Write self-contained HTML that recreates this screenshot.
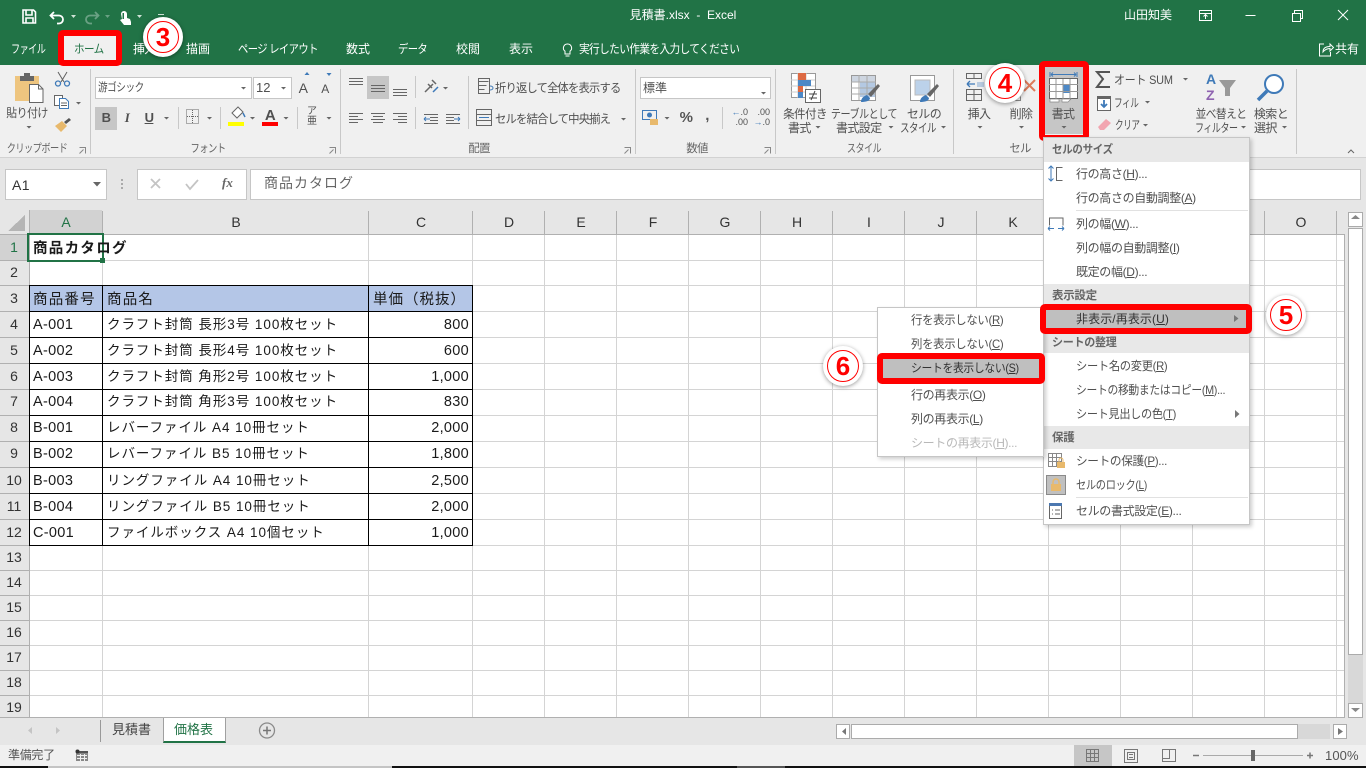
<!DOCTYPE html>
<html lang="ja"><head><meta charset="utf-8"><title>見積書.xlsx - Excel</title>
<style>
html,body{margin:0;padding:0;background:#fff}
#p{position:relative;width:1366px;height:768px;overflow:hidden;background:#fff;font-family:"Liberation Sans","Noto Sans CJK JP",sans-serif;color:#505050}
.b,.t,svg{position:absolute}
svg{left:0;top:0}
.t{white-space:nowrap;font-size:11.5px;line-height:20px;letter-spacing:-.6px;transform-origin:0 50%}
.c{transform:translateX(-50%);transform-origin:50% 50%}
.r{transform:translateX(-100%)}
.w{color:#fff;font-size:12px;letter-spacing:-.7px}
.s{color:#1a1a1a;font-size:14.5px;letter-spacing:.3px;font-family:"Liberation Sans","Noto Sans CJK JP",sans-serif}
.k{font-size:13.5px;letter-spacing:.95px}
.h{color:#333;font-size:14px;letter-spacing:0}
.m{font-size:12px;letter-spacing:-.35px;color:#505050}
.mh{font-size:11.5px;font-weight:bold;color:#666;letter-spacing:-.3px}
.l{color:#666;font-size:11.5px;letter-spacing:-.7px}
u{text-underline-offset:1px}
.red{border:6px solid #f00;border-radius:5px;box-sizing:border-box}
.n{position:absolute;width:40px;height:40px;border-radius:50%;background:#fff;box-shadow:0 1px 4px rgba(0,0,0,.4)}
.n i{position:absolute;left:4px;top:4px;width:30px;height:30px;border:1px solid #f00;border-radius:50%;color:#f00;font:bold 26px/30px "Liberation Sans",sans-serif;text-align:center;font-style:normal}
</style></head><body><div id="p">

<div class="b" style="left:0;top:0;width:1366px;height:65px;background:#217346"></div>
<div class="b" style="left:0;top:65px;width:1366px;height:93px;background:#f0f0f0;border-bottom:1px solid #d2d2d2;box-sizing:border-box"></div>
<div class="b" style="left:0;top:158px;width:1366px;height:52px;background:#e6e6e6"></div>
<div class="b" style="left:0;top:210px;width:1345px;height:24px;background:#e6e6e6"></div>
<div class="b" style="left:0;top:234px;width:29px;height:483px;background:#e6e6e6"></div>
<div class="b" style="left:29px;top:210px;width:73px;height:24px;background:#d2d2d2"></div>
<div class="b" style="left:0;top:234px;width:29px;height:26px;background:#d2d2d2"></div>
<div class="b" style="left:1345px;top:210px;width:21px;height:507px;background:#e6e6e6"></div>
<div class="b" style="left:29px;top:285px;width:443px;height:26px;background:#b4c6e7"></div>
<div class="b" style="left:0;top:717px;width:1366px;height:28px;background:#e6e6e6"></div>
<div class="b" style="left:0;top:745px;width:1366px;height:21px;background:#f0f0f0"></div>
<div class="b" style="left:0;top:766px;width:48px;height:2px;background:#111"></div>
<div class="b" style="left:48px;top:766px;width:344px;height:2px;background:#c4c4c4"></div>
<div class="b" style="left:392px;top:766px;width:974px;height:2px;background:#111"></div>
<div class="b" style="left:737px;top:766px;width:48px;height:2px;background:#555"></div>

<!-- boxes -->
<div class="b" style="left:95px;top:77px;width:157px;height:22px;background:#fff;border:1px solid #c6c6c6;box-sizing:border-box"></div>
<div class="b" style="left:253px;top:77px;width:39px;height:22px;background:#fff;border:1px solid #c6c6c6;box-sizing:border-box"></div>
<div class="b" style="left:640px;top:77px;width:131px;height:22px;background:#fff;border:1px solid #c6c6c6;box-sizing:border-box"></div>
<div class="b" style="left:95px;top:107px;width:22px;height:23px;background:#c6c6c6"></div>
<div class="b" style="left:367px;top:76px;width:22px;height:23px;background:#c6c6c6"></div>
<div class="b" style="left:1045px;top:66px;width:38px;height:68px;background:#c6c6c6"></div>
<div class="b" style="left:5px;top:169px;width:102px;height:31px;background:#fff;border:1px solid #c6c6c6;box-sizing:border-box"></div>
<div class="b" style="left:137px;top:169px;width:110px;height:31px;background:#fff;border:1px solid #c6c6c6;box-sizing:border-box"></div>
<div class="b" style="left:250px;top:169px;width:1111px;height:31px;background:#fff;border:1px solid #c6c6c6;box-sizing:border-box"></div>
<div class="b" style="left:1348px;top:212px;width:15px;height:15px;background:#fff;border:1px solid #ababab;box-sizing:border-box"></div>
<div class="b" style="left:1348px;top:228px;width:15px;height:427px;background:#fff;border:1px solid #ababab;box-sizing:border-box"></div>
<div class="b" style="left:1348px;top:655px;width:15px;height:48px;background:#d8d8d8"></div>
<div class="b" style="left:1348px;top:703px;width:15px;height:15px;background:#fff;border:1px solid #ababab;box-sizing:border-box"></div>
<div class="b" style="left:836px;top:724px;width:14px;height:15px;background:#fff;border:1px solid #ababab;box-sizing:border-box"></div>
<div class="b" style="left:851px;top:724px;width:447px;height:15px;background:#fff;border:1px solid #ababab;box-sizing:border-box"></div>
<div class="b" style="left:1298px;top:724px;width:32px;height:15px;background:#d8d8d8"></div>
<div class="b" style="left:1333px;top:724px;width:14px;height:15px;background:#fff;border:1px solid #ababab;box-sizing:border-box"></div>
<div class="b" style="left:1074px;top:745px;width:38px;height:21px;background:#c6c6c6"></div>
<div class="b" style="left:163px;top:717px;width:63px;height:26px;background:#fff;border:1px solid #a0a0a0;border-top:0;border-bottom:2px solid #217346;box-sizing:border-box"></div>

<!-- grid -->
<svg width="1366" height="768" fill="none" shape-rendering="crispEdges">
<g stroke="#d4d4d4">
<path d="M29 260.5H1345M29 285.5H1345M29 311.5H1345M29 337.5H1345M29 363.5H1345M29 389.5H1345M29 415.5H1345M29 441.5H1345M29 467.5H1345M29 493.5H1345M29 519.5H1345M29 545.5H1345M29 570.5H1345M29 595.5H1345M29 620.5H1345M29 645.5H1345M29 670.5H1345M29 695.5H1345"/>
<path d="M102.5 234V717M368.5 234V717M472.5 234V717M544.5 234V717M616.5 234V717M688.5 234V717M760.5 234V717M832.5 234V717M904.5 234V717M976.5 234V717M1048.5 234V717M1120.5 234V717M1192.5 234V717M1264.5 234V717M1336.5 234V717"/>
</g>
<g stroke="#b0b0b0">
<path d="M29.5 210V717M0 234.5H1345M0 717.5H1345M1344.5 234V717"/>
<path d="M102.5 211V234M368.5 211V234M472.5 211V234M544.5 211V234M616.5 211V234M688.5 211V234M760.5 211V234M832.5 211V234M904.5 211V234M976.5 211V234M1048.5 211V234M1120.5 211V234M1192.5 211V234M1264.5 211V234M1336.5 211V234"/>
<path d="M0 260.5H29M0 285.5H29M0 311.5H29M0 337.5H29M0 363.5H29M0 389.5H29M0 415.5H29M0 441.5H29M0 467.5H29M0 493.5H29M0 519.5H29M0 545.5H29M0 570.5H29M0 595.5H29M0 620.5H29M0 645.5H29M0 670.5H29M0 695.5H29"/>
</g>
<g stroke="#000">
<path d="M29 285.5H473M29 311.5H473M29 337.5H473M29 363.5H473M29 389.5H473M29 415.5H473M29 441.5H473M29 467.5H473M29 493.5H473M29 519.5H473M29 545.5H473M29.5 285V546M102.5 285V546M368.5 285V546M472.5 285V546"/>
</g>
<path d="M8 231L25 215V231Z" fill="#b5b5b5"/>
<rect x="28" y="234" width="75" height="27" stroke="#217346" stroke-width="2" />
<rect x="100" y="258" width="5" height="5" fill="#217346"/>
<!-- ribbon dividers -->
<path stroke="#c8c8c8" d="M90.5 69V154M340.5 69V154M635.5 69V154M775.5 69V154M953.5 69V154M1296.5 69V154M178.5 107V129M220.5 107V129M297.5 107V129M415.5 76V98M415.5 107V129M468.5 76V129M722.5 107V129"/>
<path stroke="#999" d="M100.5 720V742"/>
</svg>

<!-- icons -->
<svg width="1366" height="768" fill="none">
<!-- QAT -->
<g stroke="#fff" stroke-width="1.6"><path d="M23 10h10.5l2 2v11H23z"/><path d="M26 10v5h6v-5M26 23v-5h7v5" /></g>
<path d="M54 12l-3.500 3.500 3.500 3.500M51 15.500h8a4 4 0 0 1 0 8h-2" stroke="#fff" stroke-width="1.800"/>
<path d="M71 15h5l-2.500 3z" fill="#cfe3d7"/>
<path d="M95 12l3.500 3.500-3.500 3.500M98 15.500h-8a4 4 0 0 0 0 8h2" stroke="#6aa184" stroke-width="1.800"/>
<path d="M105 15h5l-2.500 3z" fill="#6aa184"/>
<path d="M121 14a3 3 0 0 1 6 0v4l3 1 1 3v3h-7l-4-5 2-1z" fill="#fff"/><path d="M122.500 13v6h1.500v-6z" fill="#217346"/>
<path d="M137 15h5l-2.500 3z" fill="#cfe3d7"/>
<path d="M158 14.500h6" stroke="#cfe3d7"/>
<!-- bulb -->
<path d="M567.500 44a4 4 0 0 0-2.500 7.200V54h5v-2.800A4 4 0 0 0 567.500 44zM565.500 56h4" stroke="#fff" stroke-width="1"/>
<!-- share -->
<path d="M1324 44h-4.500v12h11v-4M1323 52c0-4 3-5.500 7-5.500V44l3.500 3.500-3.500 3.500v-2.500c-3 0-5 1-7 3.500z" stroke="#fff"/>
<!-- window -->
<g stroke="#fff"><path d="M1199.500 10.500h12v10h-12zM1199.500 13.500h12M1205.500 19v-4M1203.500 16.500l2-2 2 2"/><path d="M1245.500 15.500h10"/><path d="M1292.500 13.500h8v8h-8zM1294.500 13v-2.500h8v8h-2"/><path d="M1338 10l10 10M1348 10l-10 10"/></g>
<!-- clipboard -->
<path d="M15 76h24v25H15z" fill="#eec57f"/><path d="M20 76h14v5H20z" fill="#666"/><path d="M24 73h6v4h-6z" fill="#666"/>
<path d="M29.500 84.500h9l4.500 4.500v13.500H29.500z" fill="#fff" stroke="#666"/><path d="M38.500 84.500v4.500h4.500" stroke="#666"/>
<g stroke="#606060"><path d="M58 72l6 10M67 72l-6 10"/></g><circle cx="58" cy="83.500" r="2.500" stroke="#3f7ab8" stroke-width="1.300"/><circle cx="67" cy="83.500" r="2.500" stroke="#3f7ab8" stroke-width="1.300"/>
<path d="M54.500 95.500h8v10h-8z" fill="#fff" stroke="#666"/><path d="M59.500 98.500h6l3 3v7h-9z" fill="#fff" stroke="#3f7ab8"/><path d="M61 103h6M61 105.500h6" stroke="#666"/>
<path d="M55 126l7-5 5 5-6 6z" fill="#e8b96c"/><path d="M64 122l5-4 2 2-5 4z" fill="#555"/>
<!-- carets -->
<g fill="#666"><path d="M26.500 126h5l-2.500 2.500zM76 102h5l-2.500 2.500zM241 87h5l-2.500 2.500zM281 87h5l-2.500 2.500zM164 117h5l-2.500 2.500zM207 117h5l-2.500 2.500zM250 117h5l-2.500 2.500zM283.500 117h5l-2.500 2.500zM326.500 117h5l-2.500 2.500zM443 87h5l-2.500 2.500zM621 118h5l-2.500 2.500zM761 92h5l-2.500 2.500zM664.500 117h5l-2.500 2.500zM977.500 126h5l-2.500 2.500zM1019 126h5l-2.500 2.500zM1061.500 126h5l-2.500 2.500zM1183 78h5l-2.500 2.500zM1145 101h5l-2.500 2.500zM1143 124h5l-2.500 2.500zM815.500 126h5l-2.500 2.500zM888.500 126h5l-2.500 2.500zM941 126h5l-2.500 2.500zM1241 126h5l-2.500 2.500zM1282 126h5l-2.500 2.500zM93 182h8l-4 4.500z"/></g>
<path d="M307 72l2.500 3h-5zM329 76l2.500-3h-5z" fill="#3f7ab8"/><path d="M1348 153l3-3 3 3" stroke="#666"/>
<!-- align -->
<g stroke="#666"><path d="M349 78.500h14M349 81.500h14M349 84.500h14M371 85.500h14M371 88.500h14M371 91.500h14M393 89.500h14M393 92.500h14M393 95.500h14"/>
<path d="M349 113.500h14M349 116.500h9M349 119.500h14M349 122.500h9M371 113.500h14M373 116.500h10M371 119.500h14M373 122.500h10M393 113.500h14M398 116.500h9M393 119.500h14M398 122.500h9"/>
<path d="M424 114.500h14M430 117.500h8M430 120.500h8M424 123.500h14M446 114.500h14M446 117.500h8M446 120.500h8M446 123.500h14"/>
<path d="M478.500 81.500h10M478.500 85.500h8M478.500 89.500h6M478.500 78.500h11v15h-11z"/>
<path d="M476.500 109.500h15v16h-15zM476.500 114.500h15M476.500 120.500h15"/></g>
<path d="M424 119h6M424 119l2-2M424 119l2 2M460 119h-6M460 119l-2-2M460 119l-2 2M479 117.500h10" stroke="#3f7ab8"/>
<path d="M490 86c2 0 3 1 3 2s-1 2-3 2" stroke="#3f7ab8"/>
<!-- orientation -->
<path d="M425 92l8-8M428 84l4 4M432 80l4 4" stroke="#666" stroke-width="1.500"/><path d="M433 92l5-5" stroke="#3f7ab8" stroke-width="1.500"/>
<!-- font row -->
<g stroke="#666"><path d="M186.500 109.500h12v14h-12z" stroke-dasharray="1 1"/><path d="M192.500 110v13M187 116.500h11" stroke-dasharray="1 1"/></g>
<path d="M232 113l6-6 5 5-6 6z" fill="#fff" stroke="#666"/><path d="M243 113l2 4" stroke="#3f7ab8" stroke-width="1.500"/>
<rect x="228" y="122" width="16" height="4" fill="#ff0"/><rect x="262" y="122" width="16" height="4" fill="#f00"/>
<!-- currency -->
<path d="M642.500 110.500h14v9h-14z" stroke="#3f7ab8"/><circle cx="649.500" cy="115" r="2.500" fill="#3f7ab8"/><path d="M650 119h8v6h-8z" fill="#e8b96c"/>
<!-- Cond format -->
<path d="M791.500 73.500h24v24h-24z" fill="#fff" stroke="#999"/>
<path d="M791 80h24M791 86h24M791 92h24M798 73v25M806 73v25" stroke="#ccc"/>
<path d="M798 73h8v7h-8zM798 86h5v6h-5z" fill="#dd6a43"/><path d="M798 80h13v6h-13zM798 92h5v6h-5z" fill="#4c88c6"/>
<path d="M805.500 89.500h15v13h-15z" fill="#fff" stroke="#666"/><path d="M809 94h8M809 98h8M815 91l-4 9" stroke="#444"/>
<!-- table -->
<path d="M851.500 75.500h24v25h-24z" fill="#fff" stroke="#999"/><path d="M852 76h23v6h-23z" fill="#cdd5e0"/><path d="M860 82h15v15h-15z" fill="#b4c9e3"/><path d="M851 82h25M851 88h25M851 94h25M859 75v25M867 75v25" stroke="#aaa"/><path d="M868 94l10-10 2 2-9 11z" fill="#666"/><path d="M861 102c0-4 3-6 6-7l3 3c0 3-4 4-9 4z" fill="#3f7ab8"/>
<!-- cell style -->
<path d="M910.500 75.500h24v25h-24z" fill="#fff" stroke="#999"/><path d="M915 80h15v15h-15z" fill="#bcd2ea" stroke="#bbb"/><path d="M927 94l10-10 2 2-9 11z" fill="#666"/><path d="M920 102c0-4 3-6 6-7l3 3c0 3-4 4-9 4z" fill="#3f7ab8"/>
<!-- insert -->
<g stroke="#666"><path d="M966.500 73.500h15v5h-15zM974 73.500v5M966.500 89.500h15v11h-15zM966.500 94.500h15M974 89.500v11"/></g><path d="M967 84h8M967 84l3-3M967 84l3 3" stroke="#3f7ab8" stroke-width="1.300"/><rect x="977" y="82" width="7" height="5" fill="#b8cbe0"/>
<!-- delete -->
<path d="M1024 80l11 11M1035 80l-11 11" stroke="#dd7a5a" stroke-width="2"/><path d="M1020.500 96.500v4h-5" stroke="#888"/>
<!-- 書式 icon -->
<path d="M1049.500 78.500h28v20h-28z" fill="#fff" stroke="#666"/><path d="M1063 84h7v9h-7z" fill="#4c88c6"/><path d="M1049 84.500h29M1049 91.500h29M1056 79v20M1063 79v20M1070 79v20" stroke="#999"/>
<path d="M1050 99h9v3h-9zM1062 99h9l-3 3h-6z" fill="#fff" stroke="#888" stroke-width=".7"/>
<path d="M1050 72v5M1077 72v5M1051 74.500h25M1051 74.500l2-2M1051 74.500l2 2M1076 74.500l-2-2M1076 74.500l-2 2" stroke="#3f7ab8"/>
<!-- sigma fill clear -->
<path d="M1110 72h-13l6 7-6 8h13" stroke="#555" stroke-width="2"/>
<path d="M1097.500 96.500h13v14h-13z" stroke="#666" fill="#fff"/><path d="M1098 97h12v2h-12z" fill="#666"/><path d="M1104 100v7M1101 104l3 3 3-3" stroke="#3f7ab8" stroke-width="1.800"/>
<path d="M1098 127l8-8 5 4-7 7h-4z" fill="#f2a5b0"/>
<!-- sort -->
<text x="1206" y="84" font-family="Liberation Sans" font-size="14" font-weight="bold" fill="#3f7ab8">A</text><text x="1206" y="100" font-family="Liberation Sans" font-size="14" font-weight="bold" fill="#8e62b0">Z</text><path d="M1219 80h17l-6 8v8h-5v-8z" fill="#999"/>
<!-- search -->
<circle cx="1274" cy="84" r="9" stroke="#3f7ab8" stroke-width="2" fill="#fff"/><path d="M1267 91l-9 9" stroke="#3f7ab8" stroke-width="3.500"/>
<!-- launchers -->
<g stroke="#888"><path d="M79.500 147.500h6v6M79.500 153.500l4-4M329.500 147.500h6v6M329.500 153.500l4-4M624.500 147.500h6v6M624.500 153.500l4-4M764.500 147.500h6v6M764.500 153.500l4-4"/></g>
<!-- formula -->
<path d="M151 179l9 9M160 179l-9 9" stroke="#c4c4c4" stroke-width="1.800"/><path d="M186 184l4 5 8-9" stroke="#c4c4c4" stroke-width="1.800"/>
<g fill="#aaa"><rect x="121" y="179" width="2" height="2"/><rect x="121" y="183" width="2" height="2"/><rect x="121" y="187" width="2" height="2"/></g>
<!-- tab/scroll controls -->
<path d="M32 727l-4 3.500 4 3.500zM56 727l4 3.500-4 3.500z" fill="#c4c4c4"/>
<circle cx="267" cy="730.500" r="7.500" stroke="#8a8a8a" stroke-width="1.300"/><path d="M263 730.500h8M267 726.500v8" stroke="#777" stroke-width="1.500"/>
<path d="M1351 219l4.500-4 4.500 4z" fill="#888"/><path d="M1351 708l4.500 4 4.500-4z" fill="#888"/>
<path d="M846 728l-4 3.500 4 3.500zM1338 728l5 3.500-5 3.500z" fill="#777"/>
<!-- status -->
<path d="M1086.500 749.500h12v12h-12zM1086.500 753.500h12M1086.500 757.500h12M1090.500 749.500v12M1094.500 749.500v12" stroke="#777"/>
<path d="M1124.500 749.500h13v13h-13zM1127.500 752.500h7v7h-7zM1129 754.500h4M1129 757.500h4" stroke="#777"/>
<path d="M1162.500 749.500h13v12h-13zM1162.500 758.500h7v-9" stroke="#777"/>
<path d="M1193 755.500h6M1307 755.500h6M1310 752.500v6" stroke="#777" stroke-width="1.500"/><path d="M1203 755.500h100" stroke="#aaa"/><rect x="1251" y="750" width="4" height="11" fill="#666"/>
<rect x="76" y="752" width="12" height="9" fill="#888"/><rect x="78" y="751" width="10" height="2" fill="#555"/><circle cx="77.500" cy="751.500" r="2" fill="#333"/>
<path d="M77 755.500h10M77 758.500h10M80.500 754v7M84.500 754v7" stroke="#f0f0f0"/>
</svg>

<!-- title text -->
<div class="t w c" style="left:683px;top:5px;letter-spacing:0">見積書.xlsx&nbsp; - &nbsp;Excel</div>
<div class="t w" style="left:1124px;top:5px;letter-spacing:0">山田知美</div>
<div class="t w" style="left:11px;top:39px;transform:scaleX(.76)">ファイル</div>
<div class="t w" style="left:133px;top:39px">挿入</div>
<div class="t w" style="left:186px;top:39px;letter-spacing:0">描画</div>
<div class="t w" style="left:238px;top:39px;transform:scaleX(.86)">ページ レイアウト</div>
<div class="t w" style="left:346px;top:39px;letter-spacing:0">数式</div>
<div class="t w" style="left:398px;top:39px;transform:scaleX(.86)">データ</div>
<div class="t w" style="left:456px;top:39px;letter-spacing:0">校閲</div>
<div class="t w" style="left:509px;top:39px;letter-spacing:0">表示</div>
<div class="t w" style="left:579px;top:39px;transform:scaleX(.89)">実行したい作業を入力してください</div>
<div class="t w" style="left:1335px;top:39px;letter-spacing:0">共有</div>

<!-- ribbon text -->
<div class="t c" style="left:27px;top:103px;font-size:12px;transform:translateX(-50%) scaleX(.91)">貼り付け</div>
<div class="t" style="left:98px;top:78px;font-size:11.5px;transform:scaleX(.84)">游ゴシック</div>
<div class="t" style="left:256px;top:78px;font-size:13px;letter-spacing:0">12</div>
<div class="t c" style="left:303px;top:78px;font-size:14px">A</div>
<div class="t c" style="left:325px;top:79px;font-size:12px">A</div>
<div class="t c" style="left:106px;top:108px;font-size:13px;font-weight:bold">B</div>
<div class="t c" style="left:127px;top:108px;font-size:13px;font-style:italic;font-family:'Liberation Serif',serif;font-weight:bold">I</div>
<div class="t c" style="left:149px;top:108px;font-size:13px;font-weight:bold"><u>U</u></div>
<div class="t c" style="left:270px;top:106px;font-size:15px;font-weight:bold">A</div>
<div class="t c" style="left:312px;top:107px;font-size:10px;line-height:10px;white-space:normal;width:10px;letter-spacing:0">ア<br>亜</div>
<div class="t" style="left:495px;top:78px;font-size:12px;letter-spacing:-.85px;transform:scaleX(.94)">折り返して全体を表示する</div>
<div class="t" style="left:495px;top:109px;font-size:12px;letter-spacing:-.95px;transform:scaleX(.95)">セルを結合して中央揃え</div>
<div class="t" style="left:643px;top:78px;font-size:12px;letter-spacing:0">標準</div>
<div class="t c" style="left:686px;top:108px;font-size:15px;font-weight:bold;color:#555">%</div>
<div class="t c" style="left:707px;top:106px;font-size:15px;font-weight:bold;color:#555">,</div>
<div class="t c" style="left:738px;top:107px;font-size:9px;line-height:10px;letter-spacing:0;white-space:normal;width:20px;text-align:right"><span style="color:#3f7ab8">←</span>.0<br>.00</div>
<div class="t c" style="left:760px;top:107px;font-size:9px;line-height:10px;letter-spacing:0;white-space:normal;width:20px;text-align:right">.00<br><span style="color:#3f7ab8">→</span>.0</div>
<div class="t c" style="left:805px;top:104px;font-size:12px;transform:translateX(-50%) scaleX(.96)">条件付き</div>
<div class="t" style="left:788px;top:118px;font-size:12px">書式</div>
<div class="t c" style="left:864px;top:104px;font-size:12px;transform:translateX(-50%) scaleX(.84)">テーブルとして</div>
<div class="t" style="left:836px;top:118px;font-size:12px">書式設定</div>
<div class="t c" style="left:924px;top:104px;font-size:12px">セルの</div>
<div class="t" style="left:900px;top:118px;font-size:12px;transform:scaleX(.79)">スタイル</div>
<div class="t c" style="left:979px;top:104px;font-size:12px">挿入</div>
<div class="t c" style="left:1021px;top:104px;font-size:12px">削除</div>
<div class="t c" style="left:1063px;top:104px;font-size:12px">書式</div>
<div class="t" style="left:1114px;top:70px;font-size:12px;letter-spacing:-.2px;transform:scaleX(.91)">オート SUM</div>
<div class="t" style="left:1114px;top:93px;font-size:12px;transform:scaleX(.72)">フィル</div>
<div class="t" style="left:1115px;top:115px;font-size:12px;transform:scaleX(.72)">クリア</div>
<div class="t c" style="left:1221px;top:104px;font-size:12px;transform:translateX(-50%) scaleX(.89)">並べ替えと</div>
<div class="t" style="left:1195px;top:118px;font-size:12px;transform:scaleX(.75)">フィルター</div>
<div class="t c" style="left:1271px;top:104px;font-size:12px">検索と</div>
<div class="t" style="left:1254px;top:118px;font-size:12px">選択</div>
<div class="t l c" style="left:37px;top:139px;transform:translateX(-50%) scaleX(.8)">クリップボード</div>
<div class="t l c" style="left:208px;top:139px;transform:translateX(-50%) scaleX(.81)">フォント</div>
<div class="t l c" style="left:479px;top:139px">配置</div>
<div class="t l c" style="left:697px;top:139px">数値</div>
<div class="t l c" style="left:864px;top:139px;transform:translateX(-50%) scaleX(.79)">スタイル</div>
<div class="t l c" style="left:1020px;top:139px">セル</div>

<!-- formula bar -->
<div class="t" style="left:12px;top:175px;font-size:14px;letter-spacing:.4px;color:#333">A1</div>
<div class="t" style="left:222px;top:173px;font-size:13px;font-style:italic;font-weight:bold;font-family:'Liberation Serif',serif;color:#666;letter-spacing:0">fx</div>
<div class="t" style="left:264px;top:173px;font-size:14px;letter-spacing:1px;color:#666">商品カタログ</div>

<!-- column headers -->
<div class="t h c" style="left:66px;top:212px;color:#217346">A</div>
<div class="t h c" style="left:236px;top:212px">B</div>
<div class="t h c" style="left:421px;top:212px">C</div>
<div class="t h c" style="left:509px;top:212px">D</div>
<div class="t h c" style="left:581px;top:212px">E</div>
<div class="t h c" style="left:653px;top:212px">F</div>
<div class="t h c" style="left:725px;top:212px">G</div>
<div class="t h c" style="left:797px;top:212px">H</div>
<div class="t h c" style="left:869px;top:212px">I</div>
<div class="t h c" style="left:941px;top:212px">J</div>
<div class="t h c" style="left:1013px;top:212px">K</div>
<div class="t h c" style="left:1301px;top:212px">O</div>

<!-- row headers -->
<div class="t h c" style="left:14px;top:237px;color:#217346">1</div>
<div class="t h c" style="left:14px;top:262px">2</div>
<div class="t h c" style="left:14px;top:288px">3</div>
<div class="t h c" style="left:14px;top:314px">4</div>
<div class="t h c" style="left:14px;top:340px">5</div>
<div class="t h c" style="left:14px;top:366px">6</div>
<div class="t h c" style="left:14px;top:391px">7</div>
<div class="t h c" style="left:14px;top:417px">8</div>
<div class="t h c" style="left:14px;top:443px">9</div>
<div class="t h c" style="left:14px;top:470px">10</div>
<div class="t h c" style="left:14px;top:496px">11</div>
<div class="t h c" style="left:14px;top:522px">12</div>
<div class="t h c" style="left:14px;top:547px">13</div>
<div class="t h c" style="left:14px;top:572px">14</div>
<div class="t h c" style="left:14px;top:597px">15</div>
<div class="t h c" style="left:14px;top:622px">16</div>
<div class="t h c" style="left:14px;top:647px">17</div>
<div class="t h c" style="left:14px;top:672px">18</div>
<div class="t h c" style="left:14px;top:697px">19</div>

<!-- cells -->
<div class="t s" style="left:33px;top:239px;font-weight:bold;letter-spacing:1.3px">商品カタログ</div>
<div class="t s" style="left:33px;top:290px;letter-spacing:1.2px">商品番号</div>
<div class="t s" style="left:107px;top:290px;letter-spacing:1.2px">商品名</div>
<div class="t s" style="left:373px;top:290px;letter-spacing:1px">単価（税抜）</div>
<div class="t s" style="left:33px;top:315px">A-001</div><div class="t s k" style="left:107px;top:315px">クラフト封筒 長形3号 100枚セット</div><div class="t s r" style="left:469px;top:315px">800</div>
<div class="t s" style="left:33px;top:341px">A-002</div><div class="t s k" style="left:107px;top:341px">クラフト封筒 長形4号 100枚セット</div><div class="t s r" style="left:469px;top:341px">600</div>
<div class="t s" style="left:33px;top:367px">A-003</div><div class="t s k" style="left:107px;top:367px">クラフト封筒 角形2号 100枚セット</div><div class="t s r" style="left:469px;top:367px">1,000</div>
<div class="t s" style="left:33px;top:392px">A-004</div><div class="t s k" style="left:107px;top:392px">クラフト封筒 角形3号 100枚セット</div><div class="t s r" style="left:469px;top:392px">830</div>
<div class="t s" style="left:33px;top:418px">B-001</div><div class="t s k" style="left:107px;top:418px">レバーファイル A4 10冊セット</div><div class="t s r" style="left:469px;top:418px">2,000</div>
<div class="t s" style="left:33px;top:444px">B-002</div><div class="t s k" style="left:107px;top:444px">レバーファイル B5 10冊セット</div><div class="t s r" style="left:469px;top:444px">1,800</div>
<div class="t s" style="left:33px;top:471px">B-003</div><div class="t s k" style="left:107px;top:471px">リングファイル A4 10冊セット</div><div class="t s r" style="left:469px;top:471px">2,500</div>
<div class="t s" style="left:33px;top:497px">B-004</div><div class="t s k" style="left:107px;top:497px">リングファイル B5 10冊セット</div><div class="t s r" style="left:469px;top:497px">2,000</div>
<div class="t s" style="left:33px;top:523px">C-001</div><div class="t s k" style="left:107px;top:523px">ファイルボックス A4 10個セット</div><div class="t s r" style="left:469px;top:523px">1,000</div>

<!-- sheet tabs -->
<div class="t" style="left:112px;top:720px;font-size:13px;letter-spacing:0;color:#444">見積書</div>
<div class="t" style="left:174px;top:720px;font-size:13px;letter-spacing:0;color:#217346">価格表</div>
<div class="t" style="left:8px;top:745px;font-size:12px;letter-spacing:-.3px;color:#555">準備完了</div>
<div class="t" style="left:1325px;top:746px;font-size:13px;letter-spacing:.1px;color:#555">100%</div>

<!-- ホーム tab -->
<div class="b red" style="left:58px;top:30px;width:64px;height:36px;background:#f0f0f0"></div>
<div class="t" style="left:74px;top:39px;font-size:12px;letter-spacing:-.7px;color:#217346;transform:scaleX(.88)">ホーム</div>
<div class="n" style="left:143px;top:17px"><i>3</i></div>

<!-- 書式 red -->
<div class="b red" style="left:1039px;top:61px;width:50px;height:80px"></div>
<div class="n" style="left:985px;top:63px"><i>4</i></div>

<!-- menu 1 -->
<div class="b" style="left:1043px;top:137px;width:207px;height:388px;background:#fff;border:1px solid #c6c6c6;box-sizing:border-box;box-shadow:2px 2px 4px rgba(0,0,0,.2)"></div>
<div class="b" style="left:1044px;top:138px;width:205px;height:24px;background:#e8e8e8"></div>
<div class="b" style="left:1044px;top:284px;width:205px;height:22px;background:#e8e8e8"></div>
<div class="b" style="left:1044px;top:332px;width:205px;height:21px;background:#e8e8e8"></div>
<div class="b" style="left:1044px;top:426px;width:205px;height:23px;background:#e8e8e8"></div>
<div class="b" style="left:1076px;top:210px;width:172px;height:1px;background:#e1e1e1"></div>
<div class="b" style="left:1076px;top:497px;width:172px;height:1px;background:#e1e1e1"></div>
<div class="t mh" style="left:1052px;top:140px;transform:scaleX(.91)">セルのサイズ</div>
<div class="t m" style="left:1076px;top:164px">行の高さ(<u>H</u>)...</div>
<div class="t m" style="left:1076px;top:188px">行の高さの自動調整(<u>A</u>)</div>
<div class="t m" style="left:1076px;top:214px">列の幅(<u>W</u>)...</div>
<div class="t m" style="left:1076px;top:238px">列の幅の自動調整(<u>I</u>)</div>
<div class="t m" style="left:1076px;top:262px">既定の幅(<u>D</u>)...</div>
<div class="t mh" style="left:1052px;top:286px">表示設定</div>
<div class="t mh" style="left:1052px;top:333px;transform:scaleX(.96)">シートの整理</div>
<div class="t m" style="left:1076px;top:356px;transform:scaleX(.94)">シート名の変更(<u>R</u>)</div>
<div class="t m" style="left:1076px;top:380px;transform:scaleX(.9)">シートの移動またはコピー(<u>M</u>)...</div>
<div class="t m" style="left:1076px;top:404px;transform:scaleX(.93)">シート見出しの色(<u>T</u>)</div>
<div class="t mh" style="left:1052px;top:428px">保護</div>
<div class="t m" style="left:1076px;top:451px;transform:scaleX(.97)">シートの保護(<u>P</u>)...</div>
<div class="t m" style="left:1076px;top:475px;transform:scaleX(.85)">セルのロック(<u>L</u>)</div>
<div class="t m" style="left:1076px;top:501px">セルの書式設定(<u>E</u>)...</div>

<!-- submenu -->
<div class="b" style="left:877px;top:307px;width:167px;height:150px;background:#fff;border:1px solid #c6c6c6;box-sizing:border-box;box-shadow:2px 2px 4px rgba(0,0,0,.2)"></div>
<div class="t m" style="left:911px;top:310px;transform:scaleX(.95)">行を表示しない(<u>R</u>)</div>
<div class="t m" style="left:911px;top:334px;transform:scaleX(.95)">列を表示しない(<u>C</u>)</div>
<div class="t m" style="left:911px;top:385px">行の再表示(<u>O</u>)</div>
<div class="t m" style="left:911px;top:409px">列の再表示(<u>L</u>)</div>
<div class="t m" style="left:911px;top:433px;color:#b8b8b8">シートの再表示(<u>H</u>)...</div>

<!-- highlighted -->
<div class="b red" style="left:1040px;top:304px;width:212px;height:30px;background:#bfbfbf"></div>
<div class="t m" style="left:1076px;top:309px;color:#333;letter-spacing:.1px">非表示/再表示(<u>U</u>)</div>
<div class="b red" style="left:877px;top:353px;width:168px;height:31px;background:#bfbfbf"></div>
<div class="t m" style="left:911px;top:358px;color:#333;transform:scaleX(.9)">シートを表示しない(<u>S</u>)</div>

<!-- menu icons -->
<svg width="1366" height="768" fill="none">
<path d="M1234 315l4.500 3.500-4.500 3.500zM1235 410l4.500 4-4.500 4z" fill="#777"/>
<path d="M1051 166v15M1048.500 168.500l2.500-2.500 2.500 2.500M1048.500 178.500l2.500 2.500 2.500-2.500" stroke="#3f7ab8"/><path d="M1062.500 167.500h-6v13h6" stroke="#666"/>
<path d="M1049.500 225.500v-7.500h13.500v7.500" stroke="#666"/><path d="M1048 228.500h6M1048 228.500l2-2M1048 228.500l2 2M1064 228.500h-6M1064 228.500l-2-2M1064 228.500l-2 2" stroke="#3f7ab8"/>
<path d="M1048.500 453.500h13v13h-13zM1048.500 457.500h13M1048.500 461.500h13M1052.500 453.500v13M1056.500 453.500v13" stroke="#888"/>
<rect x="1057" y="462" width="8" height="6" fill="#e8b96c"/><path d="M1059 462v-2a2 2 0 0 1 4 0v2" stroke="#e8b96c"/>
<rect x="1046.500" y="475.500" width="19" height="19" fill="#c0c0c0" stroke="#8a8a8a"/>
<rect x="1051" y="484" width="10" height="7" fill="#e8b96c"/><path d="M1053 484v-2a3 3 0 0 1 6 0v2" stroke="#e8b96c" stroke-width="1.500"/>
<path d="M1049.500 503.500h12v15h-12z" fill="#fff" stroke="#666"/><rect x="1049" y="503" width="13" height="3" fill="#4c78b0"/><path d="M1052 510h1M1055 510h5M1052 514h1M1055 514h5" stroke="#666"/>
</svg>

<div class="n" style="left:1266px;top:295px"><i>5</i></div>
<div class="n" style="left:823px;top:346px"><i>6</i></div>
</div></body></html>
